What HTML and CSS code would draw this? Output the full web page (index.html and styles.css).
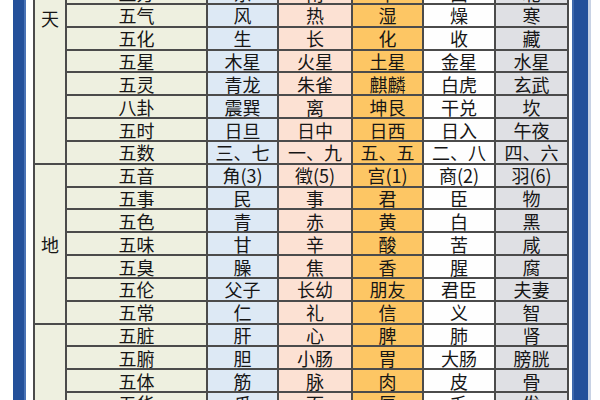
FILE: index.html
```html
<!DOCTYPE html>
<html lang="zh">
<head>
<meta charset="utf-8">
<link rel="stylesheet" href="styles.css">
</head>
<body>
<div class="page">
  <div class="bar bar-left"></div>
  <div class="sheet">
    <div class="grp grp-tian">天</div>
    <div class="lbl">五方</div><div class="c1">东</div><div class="c2">南</div><div class="c3">中</div><div class="c4">西</div><div class="c5">北</div>
    <div class="lbl">五气</div><div class="c1">风</div><div class="c2">热</div><div class="c3">湿</div><div class="c4">燥</div><div class="c5">寒</div>
    <div class="lbl">五化</div><div class="c1">生</div><div class="c2">长</div><div class="c3">化</div><div class="c4">收</div><div class="c5">藏</div>
    <div class="lbl">五星</div><div class="c1">木星</div><div class="c2">火星</div><div class="c3">土星</div><div class="c4">金星</div><div class="c5">水星</div>
    <div class="lbl">五灵</div><div class="c1">青龙</div><div class="c2">朱雀</div><div class="c3">麒麟</div><div class="c4">白虎</div><div class="c5">玄武</div>
    <div class="lbl">八卦</div><div class="c1">震巽</div><div class="c2">离</div><div class="c3">坤艮</div><div class="c4">干兑</div><div class="c5">坎</div>
    <div class="lbl">五时</div><div class="c1">日旦</div><div class="c2">日中</div><div class="c3">日西</div><div class="c4">日入</div><div class="c5">午夜</div>
    <div class="lbl">五数</div><div class="c1">三、七</div><div class="c2">一、九</div><div class="c3">五、五</div><div class="c4">二、八</div><div class="c5">四、六</div>

    <div class="grp grp-di">地</div>
    <div class="lbl">五音</div><div class="c1">角(3)</div><div class="c2">徵(5)</div><div class="c3">宫(1)</div><div class="c4">商(2)</div><div class="c5">羽(6)</div>
    <div class="lbl">五事</div><div class="c1">民</div><div class="c2">事</div><div class="c3">君</div><div class="c4">臣</div><div class="c5">物</div>
    <div class="lbl">五色</div><div class="c1">青</div><div class="c2">赤</div><div class="c3">黄</div><div class="c4">白</div><div class="c5">黑</div>
    <div class="lbl">五味</div><div class="c1">甘</div><div class="c2">辛</div><div class="c3">酸</div><div class="c4">苦</div><div class="c5">咸</div>
    <div class="lbl">五臭</div><div class="c1">臊</div><div class="c2">焦</div><div class="c3">香</div><div class="c4">腥</div><div class="c5">腐</div>
    <div class="lbl">五伦</div><div class="c1">父子</div><div class="c2">长幼</div><div class="c3">朋友</div><div class="c4">君臣</div><div class="c5">夫妻</div>
    <div class="lbl">五常</div><div class="c1">仁</div><div class="c2">礼</div><div class="c3">信</div><div class="c4">义</div><div class="c5">智</div>

    <div class="grp grp-ren">人</div>
    <div class="lbl">五脏</div><div class="c1">肝</div><div class="c2">心</div><div class="c3">脾</div><div class="c4">肺</div><div class="c5">肾</div>
    <div class="lbl">五腑</div><div class="c1">胆</div><div class="c2">小肠</div><div class="c3">胃</div><div class="c4">大肠</div><div class="c5">膀胱</div>
    <div class="lbl">五体</div><div class="c1">筋</div><div class="c2">脉</div><div class="c3">肉</div><div class="c4">皮</div><div class="c5">骨</div>
    <div class="lbl">五华</div><div class="c1">爪</div><div class="c2">面</div><div class="c3">唇</div><div class="c4">毛</div><div class="c5">发</div>
    <div class="lbl">五官</div><div class="c1">目</div><div class="c2">舌</div><div class="c3">口</div><div class="c4">鼻</div><div class="c5">耳</div>
    <div class="lbl">五志</div><div class="c1">怒</div><div class="c2">喜</div><div class="c3">思</div><div class="c4">悲</div><div class="c5">恐</div>
    <div class="lbl">五液</div><div class="c1">泪</div><div class="c2">汗</div><div class="c3">涎</div><div class="c4">涕</div><div class="c5">唾</div>
    <div class="lbl">五声</div><div class="c1">呼</div><div class="c2">笑</div><div class="c3">歌</div><div class="c4">哭</div><div class="c5">呻</div>
  </div>
  <div class="bar bar-right"></div>
</div>
</body>
</html>
```

FILE: styles.css
```css
html, body {
  margin: 0;
  padding: 0;
  background: #ffffff;
}

.page {
  width: 600px;
  height: 400px;
  overflow: hidden;
  display: flex;
  align-items: flex-start;
  padding-left: 13px;
  box-sizing: border-box;
  font-family: "Noto Sans CJK SC", "Noto Sans", sans-serif;
  color: #161616;
}

.bar {
  align-self: stretch;
  background: #24509a;
}

.bar-left {
  width: 13px;
  box-shadow: inset -2px 0 0 #4a73b6;
  margin-right: 7px;
}

.bar-right {
  width: 16px;
  margin-left: 3px;
  box-shadow: inset 2px 0 0 #3f69ad, 3px 0 0 #c8d2e4;
}

.sheet {
  margin-top: -19.83px;
  display: grid;
  grid-template-columns: 30px 139px 69px 72px 69px 70px 71px;
  grid-auto-rows: 20.83px;
  gap: 2px;
  padding: 2px;
  background: #4b4b4b;
  font-size: 18px;
  line-height: 20px;
}

.sheet > div {
  display: flex;
  align-items: center;
  justify-content: center;
  white-space: nowrap;
}

.grp {
  grid-column: 1;
  background: #eef0e0;
}

.grp-tian {
  grid-row: span 8;
  align-items: flex-start !important;
  padding-top: 26px;
}

.grp-di {
  grid-row: span 7;
}

.grp-ren {
  grid-row: span 8;
}

.lbl {
  grid-column: 2;
  background: #eef0e0;
}

.c1 { background: #dde9f5; }
.c2 { background: #fce1d3; }
.c3 { background: #fdc664; }
.c4 { background: #fefefe; }
.c5 { background: #dfe0e4; }
```
